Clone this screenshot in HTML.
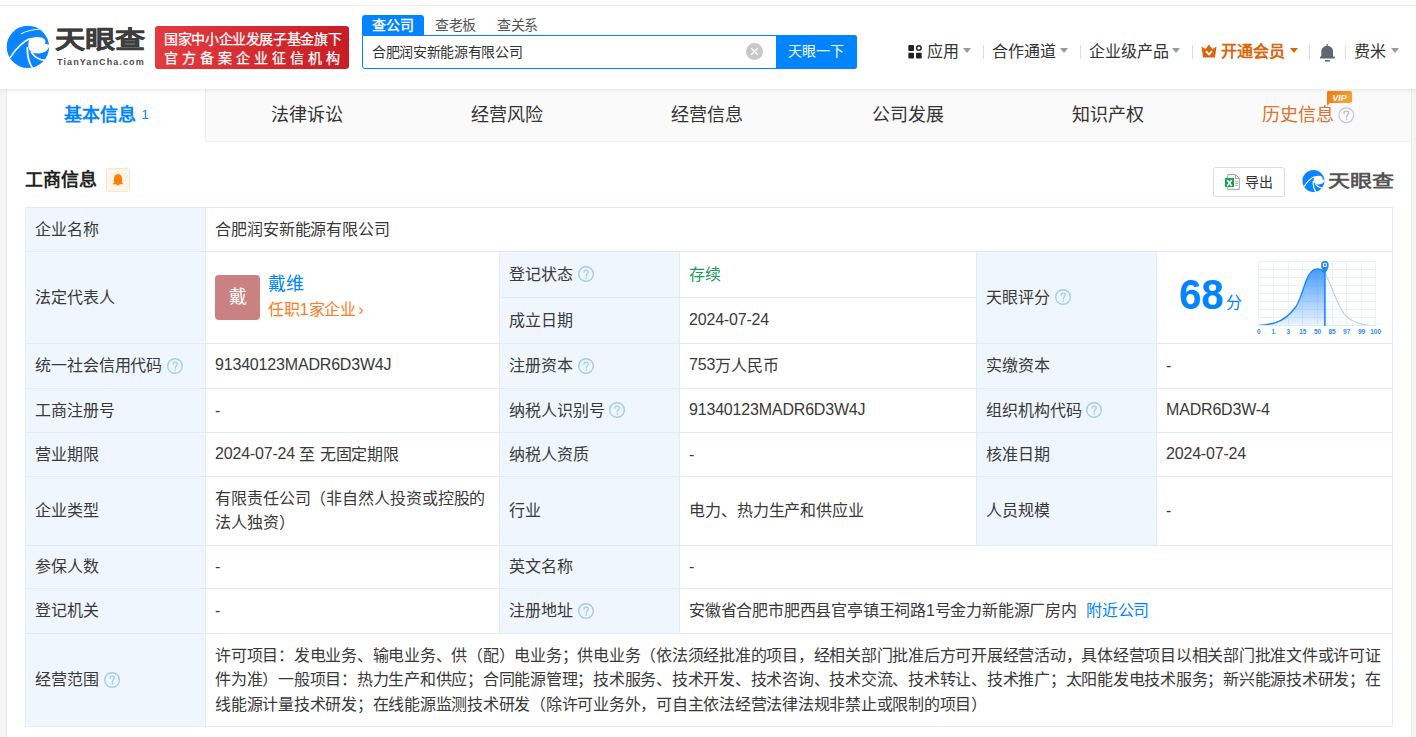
<!DOCTYPE html>
<html lang="zh-CN"><head><meta charset="utf-8">
<style>
*{margin:0;padding:0;box-sizing:border-box}
html,body{width:1416px;height:737px;overflow:hidden;background:#f5f5f5;font-family:"Liberation Sans",sans-serif;color:#333}
.a{position:absolute}
.t{position:absolute;white-space:nowrap;line-height:24px}
#hdr{position:absolute;left:0;top:0;width:1416px;height:89px;background:#fff;box-shadow:0 2px 4px rgba(0,0,0,.065);z-index:5}
#topline{position:absolute;left:0;top:5px;width:1416px;height:1px;background:#ececec}
.nav{position:absolute;top:40px;font-size:16px;line-height:24px;color:#333;white-space:nowrap}
.caret{position:absolute;top:48px;width:0;height:0;border-left:4.5px solid transparent;border-right:4.5px solid transparent;border-top:5px solid #999}
.sep{position:absolute;top:45px;width:1px;height:14px;background:#ddd}
#card{position:absolute;left:7px;top:89px;width:1404px;height:660px;background:#fff;box-shadow:-1px 0 0 #ebebeb,1px 0 0 #ebebeb}
#tabs{position:absolute;left:7px;top:89px;width:1403px;height:53px;background:#fafafa;border-bottom:1px solid #f0f0f0}
.tab{position:absolute;top:0;height:53px;font-size:18px;line-height:53px;text-align:center;color:#333}
.cell{position:absolute;border-right:1px solid #e2ecf6;border-bottom:1px solid #e2ecf6;font-size:16px;letter-spacing:-0.1px;line-height:24px;color:#393939;white-space:nowrap;display:flex;align-items:center;padding-left:9px}
.lat{position:relative;top:-1px;letter-spacing:-0.18px}
.lb{background:#eff6fd}
.q{display:inline-block;width:17px;height:17px;margin-left:5px;vertical-align:middle;position:relative;top:0px}
</style></head><body>
<div id="hdr">
  <div id="topline"></div>
  <!-- logo -->
  <svg class="a" style="left:4px;top:22px" width="50" height="50" viewBox="0 0 737 737">
    <circle cx="352" cy="367" r="312" fill="#0a84ff"/>
    <path d="M380 245 C450 210 560 212 600 258 C618 282 612 300 600 316 L672 338 C655 420 600 455 500 465 C440 465 410 450 400 440 C350 400 345 320 380 245 Z" fill="#fff"/>
    <path d="M88 528 C170 400 260 300 382 243" stroke="#fff" stroke-width="22" fill="none"/>
    <path d="M250 175 C330 130 440 108 528 106" stroke="#fff" stroke-width="14" fill="none"/>
    <path d="M345 370 C338 500 368 600 425 690" stroke="#fff" stroke-width="26" fill="none"/>
    <path d="M400 440 C450 520 520 556 600 566" stroke="#fff" stroke-width="26" fill="none"/>
  </svg>
  <div class="t" style="left:54px;top:22px;font-size:29px;line-height:36px;font-weight:bold;color:#3d3d3d;letter-spacing:0px;transform-origin:0 0;transform:translate(1px,2.5px) scale(1.04,0.84);-webkit-text-stroke:0.5px #3d3d3d">天眼查</div>
  <div class="t" style="left:57px;top:56px;font-size:9px;line-height:12px;font-weight:bold;color:#4a4a4a;letter-spacing:1.1px">TianYanCha.com</div>
  <!-- red badge -->
  <div class="a" style="left:155px;top:26px;width:194px;height:43px;border-radius:3px;background:linear-gradient(90deg,#e23b40,#c81d24)"></div>
  <div class="t" style="left:164px;top:28.5px;font-size:14px;line-height:20px;color:#fff;letter-spacing:-0.37px;-webkit-text-stroke:0.25px #fff">国家中小企业发展子基金旗下</div>
  <div class="t" style="left:164px;top:47.5px;font-size:14px;line-height:20px;color:#fff;letter-spacing:3.95px;-webkit-text-stroke:0.25px #fff">官方备案企业征信机构</div>
  <!-- search -->
  <div class="a" style="left:362px;top:15px;width:62px;height:20px;background:#0084ff;border-radius:3px 3px 0 0"></div>
  <div class="t" style="left:372px;top:15px;font-size:14px;line-height:20px;color:#fff;-webkit-text-stroke:0.35px #fff">查公司</div>
  <div class="t" style="left:435px;top:15px;font-size:14px;line-height:20px;color:#555;letter-spacing:-0.4px">查老板</div>
  <div class="t" style="left:497px;top:15px;font-size:14px;line-height:20px;color:#555;letter-spacing:-0.4px">查关系</div>
  <div class="a" style="left:362px;top:35px;width:495px;height:34px;border:1px solid #0084ff;border-radius:0 3px 3px 3px;background:#fff"></div>
  <div class="t" style="left:372px;top:40px;font-size:14px;line-height:24px;color:#333;letter-spacing:-0.35px">合肥润安新能源有限公司</div>
  <div class="a" style="left:746px;top:43px;width:17px;height:17px;border-radius:50%;background:#c8c8c8"></div>
  <svg class="a" style="left:746px;top:43px" width="17" height="17" viewBox="0 0 17 17"><path d="M5.2 5.2 L11.8 11.8 M11.8 5.2 L5.2 11.8" stroke="#fff" stroke-width="1.3"/></svg>
  <div class="a" style="left:776px;top:35px;width:81px;height:34px;background:#0084ff;border-radius:0 3px 3px 0"></div>
  <div class="t" style="left:788px;top:39px;font-size:14px;line-height:24px;color:#fff">天眼一下</div>
  <!-- nav -->
  <svg class="a" style="left:908px;top:45px" width="14" height="14" viewBox="0 0 14 14"><rect x="0.3" y="0.1" width="5.7" height="5.8" rx="1" fill="#1f2329"/><circle cx="10.85" cy="3" r="2.25" fill="none" stroke="#1f2329" stroke-width="1.5"/><rect x="0.3" y="7.7" width="5.7" height="5.8" rx="1" fill="#1f2329"/><rect x="8" y="7.7" width="5.7" height="5.8" rx="1" fill="#1f2329"/></svg>
  <div class="nav" style="left:927px">应用</div>
  <div class="caret" style="left:963px"></div>
  <div class="sep" style="left:983px"></div>
  <div class="nav" style="left:992px">合作通道</div>
  <div class="caret" style="left:1060px"></div>
  <div class="sep" style="left:1080px"></div>
  <div class="nav" style="left:1089px">企业级产品</div>
  <div class="caret" style="left:1172px"></div>
  <div class="sep" style="left:1192px"></div>
  <svg class="a" style="left:1201px;top:44px" width="16" height="14" viewBox="0 0 16 14"><path d="M0.5 2.5 L4.5 5 L8 0.5 L11.5 5 L15.5 2.5 L14 13.5 L2 13.5 Z" fill="#d9660c"/><path d="M5 7.2 L8 10.5 L11 7.2" stroke="#fff" stroke-width="1.8" fill="none"/></svg>
  <div class="nav" style="left:1221px;color:#d9660c;font-weight:bold">开通会员</div>
  <div class="caret" style="left:1290px;border-top-color:#d9660c"></div>
  <div class="sep" style="left:1309px"></div>
  <svg class="a" style="left:1319px;top:43px" width="17" height="20" viewBox="0 0 17 20"><path d="M2.3 14 V8.2 C2.3 4.9 4.9 2.9 8.15 2.9 C11.4 2.9 14 4.9 14 8.2 V14 Z" fill="#5f6670"/><rect x="1" y="13.6" width="14.8" height="1.8" rx="0.4" fill="#5f6670"/><rect x="7.55" y="1" width="1.2" height="2.6" fill="#5f6670"/><rect x="6" y="17" width="4.8" height="1.6" fill="#5f6670"/></svg>
  <div class="sep" style="left:1345px"></div>
  <div class="nav" style="left:1354px">费米</div>
  <div class="caret" style="left:1391px"></div>
</div>

<div id="card"></div>
<div id="tabs">
  <div class="a" style="left:0;top:0;width:199px;height:53px;background:#fff;border-right:1px solid #eee"></div>
  <div class="tab" style="left:0;width:199px;color:#0084ff;font-weight:bold">基本信息 <span style="font-weight:normal;font-size:13px;position:relative;top:-2px">1</span></div>
  <div class="tab" style="left:200px;width:200px">法律诉讼</div>
  <div class="tab" style="left:400px;width:200px">经营风险</div>
  <div class="tab" style="left:600px;width:200px">经营信息</div>
  <div class="tab" style="left:801px;width:200px">公司发展</div>
  <div class="tab" style="left:1001px;width:200px">知识产权</div>
  <div class="t" style="left:1255px;top:14px;font-size:18px;line-height:24px;color:#e0712a">历史信息</div>
  <svg class="a" style="left:1331px;top:18px" width="17" height="17" viewBox="0 0 17 17"><circle cx="8.3" cy="8.2" r="7.4" fill="none" stroke="#c5c9cf" stroke-width="1.3"/><path d="M6 6.4 C6 4.9 7 4.1 8.3 4.1 C9.7 4.1 10.6 5 10.6 6.2 C10.6 7.6 8.6 8 8.6 9.6 L8.6 10.2" fill="none" stroke="#bcc0c6" stroke-width="1.3" stroke-linecap="round"/><circle cx="8.6" cy="12.3" r="0.8" fill="#bcc0c6"/></svg>
  <svg class="a" style="left:1319px;top:2px" width="26" height="15" viewBox="0 0 26 15"><defs><linearGradient id="vg" x1="0" y1="0" x2="1" y2="0.3"><stop offset="0" stop-color="#ee7a12"/><stop offset="1" stop-color="#f9a032"/></linearGradient></defs><path d="M2 0 H24 Q26 0 26 2 V10 Q26 12 24 12 H4 L1 14.8 V2 Q1 0 2 0 Z" fill="url(#vg)"/><text x="13.5" y="10" font-size="9" font-weight="bold" font-style="italic" fill="#fff" text-anchor="middle" font-family="Liberation Sans">VIP</text></svg>
</div>

<!-- section header -->
<div class="t" style="left:25px;top:168px;font-size:18px;font-weight:bold;color:#222">工商信息</div>
<div class="a" style="left:106px;top:168px;width:24px;height:24px;background:#fff4ea;border:1px solid #fde4cf;border-radius:3px"></div>
<svg class="a" style="left:112px;top:172.5px" width="12" height="14" viewBox="0 0 12 14"><path d="M6 0.6 C6.4 0.6 6.6 0.9 6.7 1.2 C9 1.6 10 3.4 10 5.6 L10 9.4 L11.6 11.2 L0.4 11.2 L2 9.4 L2 5.6 C2 3.4 3 1.6 5.3 1.2 C5.4 0.9 5.6 0.6 6 0.6 Z" fill="#ff8000"/><path d="M4.2 11 Q6 14.4 7.8 11 Z" fill="#ff8000"/></svg>
<div class="a" style="left:1213px;top:167px;width:72px;height:30px;border:1px solid #dcdcdc;border-radius:3px;background:#fff"></div>
<svg class="a" style="left:1224px;top:173px" width="17" height="18" viewBox="0 0 17 18"><path d="M3.7 1.6 H11.5 L15.3 5.4 V16.4 H3.7 Z" fill="#fff" stroke="#9ea2a8" stroke-width="1"/><path d="M11.5 1.6 V5.4 H15.3" fill="none" stroke="#9ea2a8" stroke-width="1"/><path d="M11.2 8.3 H13.9 M11.2 10.4 H13.9 M11.2 12.5 H13.9" stroke="#9ea2a8" stroke-width="0.9"/><rect x="0.9" y="5" width="9.2" height="9" fill="#1a9f4a"/><path d="M3.2 7.1 L7.8 12.9 M7.8 7.1 L3.2 12.9" stroke="#fff" stroke-width="1.6"/></svg>
<div class="t" style="left:1245px;top:170px;font-size:14px;line-height:24px;color:#333">导出</div>
<svg class="a" style="left:1301px;top:168px" width="26" height="26" viewBox="0 0 737 737">
  <circle cx="352" cy="367" r="312" fill="#0a84ff"/>
  <path d="M380 245 C450 210 560 212 600 258 C618 282 612 300 600 316 L672 338 C655 420 600 455 500 465 C440 465 410 450 400 440 C350 400 345 320 380 245 Z" fill="#fff"/>
  <path d="M88 528 C170 400 260 300 382 243" stroke="#fff" stroke-width="30" fill="none"/>
  <path d="M345 370 C338 500 368 600 425 690" stroke="#fff" stroke-width="34" fill="none"/>
  <path d="M400 440 C450 520 520 556 600 566" stroke="#fff" stroke-width="34" fill="none"/>
</svg>
<div class="t" style="left:1328px;top:166px;font-size:22px;line-height:30px;font-weight:bold;color:#555;transform-origin:0 0;transform:translate(0,3.5px) scale(1.0,0.8)">天眼查</div>

<!-- table -->
<div id="tbl" class="a" style="left:25px;top:207px;width:1368px;height:520px;border-left:1px solid #e2ecf6;border-top:1px solid #e2ecf6"></div>
<div class="cell lb" style="left:26px;top:208px;width:180px;height:44px;">企业名称</div>
<div class="cell" style="left:206px;top:208px;width:1187px;height:44px;">合肥润安新能源有限公司</div>
<div class="cell lb" style="left:26px;top:252px;width:180px;height:92px;">法定代表人</div>
<div class="cell" style="left:206px;top:252px;width:294px;height:92px;"><div style="position:relative;width:100%;height:100%"><div style="position:absolute;left:0;top:23px;width:45px;height:45px;border-radius:4px;background:#c98181;color:#fff;font-size:18px;line-height:45px;text-align:center">戴</div><div style="position:absolute;left:53px;top:20px;font-size:18px;line-height:24px;color:#0084ff">戴维</div><div style="position:absolute;left:53px;top:46px;font-size:16px;line-height:24px;color:#ff7a1a">任职1家企业<span style="font-size:16px;margin-left:2px">›</span></div></div></div>
<div class="cell lb" style="left:500px;top:252px;width:180px;height:46px;">登记状态<svg class="q" width="17" height="17" viewBox="0 0 17 17"><circle cx="8" cy="8" r="7.3" fill="none" stroke="#a3cbef" stroke-width="1.4"/><path d="M6 6.3 C6 4.9 6.9 4.1 8.1 4.1 C9.4 4.1 10.3 4.9 10.3 6.1 C10.3 7.5 8.3 7.9 8.3 9.5 L8.3 10.1" fill="none" stroke="#a3cbef" stroke-width="1.3" stroke-linecap="round"/><circle cx="8.3" cy="12.1" r="0.8" fill="#a3cbef"/></svg></div>
<div class="cell" style="left:680px;top:252px;width:297px;height:46px;"><span style="color:#15a05a">存续</span></div>
<div class="cell lb" style="left:500px;top:298px;width:180px;height:46px;">成立日期</div>
<div class="cell" style="left:680px;top:298px;width:297px;height:46px;"><span class="lat">2024-07-24</span></div>
<div class="cell lb" style="left:977px;top:252px;width:180px;height:92px;">天眼评分<svg class="q" width="17" height="17" viewBox="0 0 17 17"><circle cx="8" cy="8" r="7.3" fill="none" stroke="#a3cbef" stroke-width="1.4"/><path d="M6 6.3 C6 4.9 6.9 4.1 8.1 4.1 C9.4 4.1 10.3 4.9 10.3 6.1 C10.3 7.5 8.3 7.9 8.3 9.5 L8.3 10.1" fill="none" stroke="#a3cbef" stroke-width="1.3" stroke-linecap="round"/><circle cx="8.3" cy="12.1" r="0.8" fill="#a3cbef"/></svg></div>
<div class="cell" style="left:1157px;top:252px;width:236px;height:92px;"></div>
<div class="cell lb" style="left:26px;top:344px;width:180px;height:45px;">统一社会信用代码<svg class="q" width="17" height="17" viewBox="0 0 17 17"><circle cx="8" cy="8" r="7.3" fill="none" stroke="#a3cbef" stroke-width="1.4"/><path d="M6 6.3 C6 4.9 6.9 4.1 8.1 4.1 C9.4 4.1 10.3 4.9 10.3 6.1 C10.3 7.5 8.3 7.9 8.3 9.5 L8.3 10.1" fill="none" stroke="#a3cbef" stroke-width="1.3" stroke-linecap="round"/><circle cx="8.3" cy="12.1" r="0.8" fill="#a3cbef"/></svg></div>
<div class="cell" style="left:206px;top:344px;width:294px;height:45px;"><span class="lat">91340123MADR6D3W4J</span></div>
<div class="cell lb" style="left:500px;top:344px;width:180px;height:45px;">注册资本<svg class="q" width="17" height="17" viewBox="0 0 17 17"><circle cx="8" cy="8" r="7.3" fill="none" stroke="#a3cbef" stroke-width="1.4"/><path d="M6 6.3 C6 4.9 6.9 4.1 8.1 4.1 C9.4 4.1 10.3 4.9 10.3 6.1 C10.3 7.5 8.3 7.9 8.3 9.5 L8.3 10.1" fill="none" stroke="#a3cbef" stroke-width="1.3" stroke-linecap="round"/><circle cx="8.3" cy="12.1" r="0.8" fill="#a3cbef"/></svg></div>
<div class="cell" style="left:680px;top:344px;width:297px;height:45px;"><span class="lat">753</span>万人民币</div>
<div class="cell lb" style="left:977px;top:344px;width:180px;height:45px;">实缴资本</div>
<div class="cell" style="left:1157px;top:344px;width:236px;height:45px;">-</div>
<div class="cell lb" style="left:26px;top:389px;width:180px;height:44px;">工商注册号</div>
<div class="cell" style="left:206px;top:389px;width:294px;height:44px;">-</div>
<div class="cell lb" style="left:500px;top:389px;width:180px;height:44px;">纳税人识别号<svg class="q" width="17" height="17" viewBox="0 0 17 17"><circle cx="8" cy="8" r="7.3" fill="none" stroke="#a3cbef" stroke-width="1.4"/><path d="M6 6.3 C6 4.9 6.9 4.1 8.1 4.1 C9.4 4.1 10.3 4.9 10.3 6.1 C10.3 7.5 8.3 7.9 8.3 9.5 L8.3 10.1" fill="none" stroke="#a3cbef" stroke-width="1.3" stroke-linecap="round"/><circle cx="8.3" cy="12.1" r="0.8" fill="#a3cbef"/></svg></div>
<div class="cell" style="left:680px;top:389px;width:297px;height:44px;"><span class="lat">91340123MADR6D3W4J</span></div>
<div class="cell lb" style="left:977px;top:389px;width:180px;height:44px;">组织机构代码<svg class="q" width="17" height="17" viewBox="0 0 17 17"><circle cx="8" cy="8" r="7.3" fill="none" stroke="#a3cbef" stroke-width="1.4"/><path d="M6 6.3 C6 4.9 6.9 4.1 8.1 4.1 C9.4 4.1 10.3 4.9 10.3 6.1 C10.3 7.5 8.3 7.9 8.3 9.5 L8.3 10.1" fill="none" stroke="#a3cbef" stroke-width="1.3" stroke-linecap="round"/><circle cx="8.3" cy="12.1" r="0.8" fill="#a3cbef"/></svg></div>
<div class="cell" style="left:1157px;top:389px;width:236px;height:44px;"><span class="lat">MADR6D3W-4</span></div>
<div class="cell lb" style="left:26px;top:433px;width:180px;height:44px;">营业期限</div>
<div class="cell" style="left:206px;top:433px;width:294px;height:44px;"><span class="lat">2024-07-24</span>&nbsp;至&nbsp;无固定期限</div>
<div class="cell lb" style="left:500px;top:433px;width:180px;height:44px;">纳税人资质</div>
<div class="cell" style="left:680px;top:433px;width:297px;height:44px;">-</div>
<div class="cell lb" style="left:977px;top:433px;width:180px;height:44px;">核准日期</div>
<div class="cell" style="left:1157px;top:433px;width:236px;height:44px;"><span class="lat">2024-07-24</span></div>
<div class="cell lb" style="left:26px;top:477px;width:180px;height:69px;">企业类型</div>
<div class="cell" style="left:206px;top:477px;width:294px;height:69px;">有限责任公司（非自然人投资或控股的<br>法人独资）</div>
<div class="cell lb" style="left:500px;top:477px;width:180px;height:69px;">行业</div>
<div class="cell" style="left:680px;top:477px;width:297px;height:69px;">电力、热力生产和供应业</div>
<div class="cell lb" style="left:977px;top:477px;width:180px;height:69px;">人员规模</div>
<div class="cell" style="left:1157px;top:477px;width:236px;height:69px;">-</div>
<div class="cell lb" style="left:26px;top:546px;width:180px;height:43px;">参保人数</div>
<div class="cell" style="left:206px;top:546px;width:294px;height:43px;">-</div>
<div class="cell lb" style="left:500px;top:546px;width:180px;height:43px;">英文名称</div>
<div class="cell" style="left:680px;top:546px;width:713px;height:43px;">-</div>
<div class="cell lb" style="left:26px;top:589px;width:180px;height:45px;">登记机关</div>
<div class="cell" style="left:206px;top:589px;width:294px;height:45px;">-</div>
<div class="cell lb" style="left:500px;top:589px;width:180px;height:45px;">注册地址<svg class="q" width="17" height="17" viewBox="0 0 17 17"><circle cx="8" cy="8" r="7.3" fill="none" stroke="#a3cbef" stroke-width="1.4"/><path d="M6 6.3 C6 4.9 6.9 4.1 8.1 4.1 C9.4 4.1 10.3 4.9 10.3 6.1 C10.3 7.5 8.3 7.9 8.3 9.5 L8.3 10.1" fill="none" stroke="#a3cbef" stroke-width="1.3" stroke-linecap="round"/><circle cx="8.3" cy="12.1" r="0.8" fill="#a3cbef"/></svg></div>
<div class="cell" style="left:680px;top:589px;width:713px;height:45px;"><span style="letter-spacing:-0.2px">安徽省合肥市肥西县官亭镇王祠路1号金力新能源厂房内</span><span style="color:#0084ff;margin-left:9px;letter-spacing:-0.2px">附近公司</span></div>
<div class="cell lb" style="left:26px;top:634px;width:180px;height:93px;">经营范围<svg class="q" width="17" height="17" viewBox="0 0 17 17"><circle cx="8" cy="8" r="7.3" fill="none" stroke="#a3cbef" stroke-width="1.4"/><path d="M6 6.3 C6 4.9 6.9 4.1 8.1 4.1 C9.4 4.1 10.3 4.9 10.3 6.1 C10.3 7.5 8.3 7.9 8.3 9.5 L8.3 10.1" fill="none" stroke="#a3cbef" stroke-width="1.3" stroke-linecap="round"/><circle cx="8.3" cy="12.1" r="0.8" fill="#a3cbef"/></svg></div>
<div class="cell" style="left:206px;top:634px;width:1187px;height:93px;padding-bottom:0;padding-top:1px"><div style="letter-spacing:-0.25px;line-height:24.5px">许可项目：发电业务、输电业务、供（配）电业务；供电业务（依法须经批准的项目，经相关部门批准后方可开展经营活动，具体经营项目以相关部门批准文件或许可证<br>件为准）一般项目：热力生产和供应；合同能源管理；技术服务、技术开发、技术咨询、技术交流、技术转让、技术推广；太阳能发电技术服务；新兴能源技术研发；在<br>线能源计量技术研发；在线能源监测技术研发（除许可业务外，可自主依法经营法律法规非禁止或限制的项目）</div></div>
<div class="t" style="left:1179px;top:270px;font-size:42px;line-height:50px;font-weight:bold;color:#0084ff;transform-origin:0 0;transform:scaleX(0.955)">68</div>
<div class="t" style="left:1226px;top:291px;font-size:16px;line-height:24px;color:#0084ff">分</div>
<svg class="a" style="left:1250px;top:255px" width="135" height="84" viewBox="1250 255 135 84">
  <defs><linearGradient id="gf" x1="0" y1="0" x2="0" y2="1"><stop offset="0" stop-color="#3893ff" stop-opacity=".92"/><stop offset="1" stop-color="#3893ff" stop-opacity=".1"/></linearGradient></defs>
  <path d="M1324.9 272.7 C1328 278 1330 284 1332.5 290 C1335 296 1339 306 1344 313.8 C1348 318.5 1354 322 1362 324.3 C1367 325.2 1372 325.5 1375.6 325.5 L1324.9 325.5 Z" fill="#fafbfd"/>
  <g stroke="#e8f0f9" stroke-width="1" fill="none">
    <path d="M1258.5 261 V326 M1273.5 261 V326 M1288.5 261 V326 M1302.5 261 V326 M1317.5 261 V326 M1332.5 261 V326 M1346.5 261 V326 M1361.5 261 V326 M1375.5 261 V326"/>
    <path d="M1258 261.5 H1376 M1258 269.5 H1376 M1258 277.5 H1376 M1258 285.5 H1376 M1258 293.5 H1376 M1258 301.5 H1376 M1258 309.5 H1376 M1258 317.5 H1376"/>
  </g>
  <path d="M1258.9 325.5 C1265 325 1270 324.2 1275 322.8 C1283 320.5 1290 315 1296 306.5 C1300 300 1303 290 1306 281 C1309 273 1313 269 1317.3 269 C1320.5 269 1323 270.5 1324.9 272.7 L1324.9 325.5 Z" fill="url(#gf)"/>
  <path d="M1324.9 272.7 C1328 278 1330 284 1332.5 290 C1335 296 1339 306 1344 313.8 C1348 318.5 1354 322 1362 324.3 C1367 325.2 1372 325.5 1375.6 325.5" stroke="#c3ced9" stroke-width="1.1" fill="none"/>
  <path d="M1258.9 325.5 C1265 325 1270 324.2 1275 322.8 C1283 320.5 1290 315 1296 306.5 C1300 300 1303 290 1306 281 C1309 273 1313 269 1317.3 269 C1320.5 269 1323 270.5 1324.9 272.7" stroke="#1a87ff" stroke-width="1.4" fill="none"/>
  <line x1="1258" y1="325.5" x2="1376" y2="325.5" stroke="#dfe9f4" stroke-width="1"/>
  <line x1="1324.9" y1="266" x2="1324.9" y2="326" stroke="#1a87ff" stroke-width="1.6"/>
  <path d="M1324.9 273.5 C1323.2 271 1321.1 268.2 1321.1 264.9 A3.8 3.8 0 1 1 1328.7 264.9 C1328.7 268.2 1326.6 271 1324.9 273.5 Z" fill="#1a87ff"/>
  <circle cx="1324.9" cy="264.9" r="2.2" fill="#fff"/>
  <circle cx="1324.9" cy="264.9" r="1.05" fill="#1a87ff"/>
  <g font-family="Liberation Sans" font-size="6.5" font-weight="bold" fill="#2a8cff" text-anchor="middle">
    <text x="1258.9" y="334">0</text><text x="1273.4" y="334">1</text><text x="1288.4" y="334">3</text><text x="1302.8" y="334">15</text><text x="1317.5" y="334">50</text><text x="1332.1" y="334">85</text><text x="1346.7" y="334">97</text><text x="1361.5" y="334">99</text><text x="1375.6" y="334">100</text>
  </g>
</svg>

</body></html>
